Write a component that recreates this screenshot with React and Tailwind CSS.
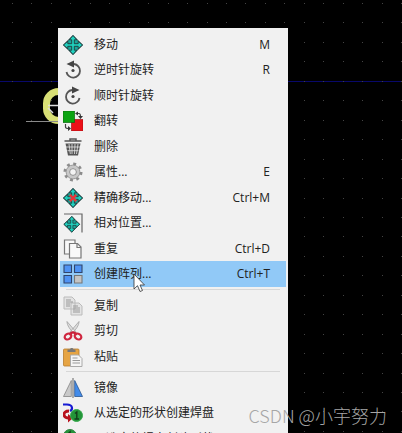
const GRID = 19.45;

const dots = Array.from({ length: 23 }, (_, row) =>
  Array.from({ length: 21 }, (_, col) => ({
    x: Math.round(12 + col * GRID),
    y: Math.round(3 + row * GRID),
  })),
).flat();

function Move() {
  return (
    <g fill="#1fd0bd" stroke="#22383a" strokeWidth=".9" strokeLinejoin="round">
      <path d="M10 .5 19.500 10 10 19.500 .5 10Z" fill="#1aa79b" />
      <path d="M10 .5 13.800 4.800H11.300V8.700H15.200V6.200L19.500 10 15.200 13.800V11.300H11.300V15.200H13.800L10 19.500 6.200 15.200H8.700V11.300H4.800V13.800L.5 10 4.800 6.200V8.700H8.700V4.800H6.200Z" />
    </g>
  );
}

const icons = {
  move: <Move />,
  ccw: (
    <>
      <path d="M11 4A6.800 6.800 0 1 1 3.500 12" fill="none" stroke="#555" strokeWidth="1.800" />
      <path d="M3.500 4 11 .5v7Z" fill="#444" />
      <circle cx="10" cy="10.500" r="1.600" fill="#444" />
    </>
  ),
  cw: (
    <>
      <path d="M9 4a6.800 6.800 0 1 0 7.500 8" fill="none" stroke="#555" strokeWidth="1.800" />
      <path d="M16.500 4 9 .5v7Z" fill="#444" />
      <circle cx="10" cy="10.500" r="1.600" fill="#444" />
    </>
  ),
  flip: (
    <>
      <path d="M8.500 8.500H20V20H8.500Z" fill="#ec1118" stroke="#a51317" strokeWidth=".7" />
      <path d="M0 0h11.500v11.500H0Z" fill="#0ca312" stroke="#0b6610" strokeWidth=".7" />
      <path d="M13.500 2.500h2.500q1.500 0 1.500 3M2.500 13v3q0 1.500 3 1.500" fill="none" stroke="#444" strokeWidth="1.200" />
      <path d="m12 2.500 3-2v4ZM8 17.500l-3-2.500v5ZM15 5h5l-2.500 3Z" fill="#333" />
    </>
  ),
  trash: (
    <>
      <path d="M1.500 4h17M7 3.500V2h6v1.500" fill="none" stroke="#555" strokeWidth="1.500" />
      <path d="M2.500 6.500h15l-2.500 12H5Z" fill="#555" />
      <path d="M6 7 7.300 17M9 7v10M12 7 11.500 17M15 7 13.500 17M3 10h14M4.500 13.700h11" stroke="#e7e7e7" strokeWidth=".8" />
    </>
  ),
  gear: (
    <>
      <circle cx="10" cy="10" r="8.200" fill="none" stroke="#8c8c8c" strokeWidth="2.600" strokeDasharray="2.900 3.540" />
      <circle cx="10" cy="10" r="5" fill="#f3f3f3" stroke="#c8c8c8" strokeWidth="3.200" />
      <circle cx="10" cy="10" r="6.900" fill="none" stroke="#858585" strokeWidth=".8" />
      <circle cx="10" cy="10" r="3.400" fill="#f3f3f3" stroke="#858585" strokeWidth=".9" />
    </>
  ),
  exact: (
    <>
      <Move />
      <path d="m6.800 6.800 6.400 6.400M13.200 6.800l-6.400 6.400" stroke="#e4373a" strokeWidth="2.500" />
    </>
  ),
  relative: (
    <>
      <path d="M1 1h18v18.500" fill="none" stroke="#666" strokeWidth="1.200" />
      <g transform="translate(.5 3) scale(.83)">
        <Move />
      </g>
    </>
  ),
  duplicate: (
    <g fill="#f8f8f8" stroke="#777" strokeWidth="1.200">
      <path d="M1.500 1H12v14H1.500Z" />
      <path d="M6.500 4.500h8L18 8v11H6.500Z" />
      <path d="M14 4.500V8.500h4" fill="none" />
    </g>
  ),
  array: (
    <g fill="#4f93f4" stroke="#30456c" strokeWidth="1.100">
      <path d="M1 1h7.500v7.500H1ZM11.500 1H19v7.500h-7.500ZM1 11.500h7.500V19H1Z" />
      <path d="M11.500 11.500H19V19h-7.500Z" fill="#c4c4c4" stroke="#777" />
    </g>
  ),
  copy: (
    <>
      <path d="M1 1h8l3 3v9H1ZM8 7h8l3 3v9H8Z" fill="#e3e3e3" stroke="#bbb" />
      <path d="M3 4h5M3 6h7M3 8h4M3 10h4M10 10h5M10 12h7M10 14h7M10 16h7" stroke="#999" />
    </>
  ),
  cut: (
    <>
      <path d="M4 .5c0 4 3 8 7.500 12.500l1.500-2ZM16 .5c0 4-3 8-7.500 12.500L7 11Z" fill="#ddd" stroke="#999" strokeWidth=".7" />
      <path d="m10 11-4 2.500M10 11l4 2.500" stroke="#c91f38" strokeWidth="2.400" />
      <ellipse cx="5" cy="15.500" rx="3.500" ry="2.700" transform="rotate(-30 5 15.500)" fill="none" stroke="#cf263f" strokeWidth="2.200" />
      <ellipse cx="15" cy="15.500" rx="3.500" ry="2.700" transform="rotate(30 15 15.500)" fill="none" stroke="#cf263f" strokeWidth="2.200" />
    </>
  ),
  paste: (
    <>
      <rect x=".5" y="2" width="15.500" height="17" rx="1" fill="#e6a443" stroke="#b77c2c" strokeWidth=".8" />
      <path d="M4.500 5V2.500H7a1.800 1.800 0 0 1 3.500 0h2V5Z" fill="#777" />
      <path d="M7.500 8h8l3.500 3.500V19.500H7.500Z" fill="#f5f5f5" stroke="#aaa" />
      <path d="M9.500 11h5M9.500 13.500h7.500M9.500 16h7.500" stroke="#999" />
    </>
  ),
  mirror: (
    <>
      <path d="M8.300 2.500v16H.5Z" fill="#c9c9c9" stroke="#858585" strokeWidth=".8" />
      <path d="M11.700 2.500v16h7.800Z" fill="#428bea" stroke="#2c568d" strokeWidth=".8" />
      <path d="M10 0v20" stroke="#555" strokeWidth=".9" />
    </>
  ),
  pad: (
    <>
      <path d="M0 1.500h4c6 0 6 5 3 6.500" fill="none" stroke="#171bd3" strokeWidth="2.200" />
      <path d="M6 8C-1 8 0 15 5 15h3" fill="none" stroke="#b8121d" strokeWidth="2.800" />
      <path d="m5 11 5 4-5 4.500Z" fill="#b8121d" />
      <circle cx="13.500" cy="12.500" r="6" fill="#239439" stroke="#38aa4d" />
      <path d="m12 10.500 1.800-1.500v7M11.500 16h4.500" fill="none" stroke="#123d1a" strokeWidth="1.400" />
    </>
  ),
  shape: (
    <>
      <circle cx="7" cy="7" r="6.500" fill="#239439" stroke="#2f8240" />
      <path d="m5 5 2-2v7M5 10h4" fill="none" stroke="#123d1a" strokeWidth="1.500" />
      <path d="M12 13h4v5" fill="none" stroke="#b8121d" strokeWidth="2" />
    </>
  ),
};

const groups = [
  [
    { icon: 'move', label: '移动', shortcut: 'M' },
    { icon: 'ccw', label: '逆时针旋转', shortcut: 'R' },
    { icon: 'cw', label: '顺时针旋转' },
    { icon: 'flip', label: '翻转' },
    { icon: 'trash', label: '删除' },
    { icon: 'gear', label: '属性...', shortcut: 'E' },
    { icon: 'exact', label: '精确移动...', shortcut: 'Ctrl+M' },
    { icon: 'relative', label: '相对位置...' },
    { icon: 'duplicate', label: '重复', shortcut: 'Ctrl+D' },
    { icon: 'array', label: '创建阵列...', shortcut: 'Ctrl+T', active: true },
  ],
  [
    { icon: 'copy', label: '复制' },
    { icon: 'cut', label: '剪切' },
    { icon: 'paste', label: '粘贴' },
  ],
  [
    { icon: 'mirror', label: '镜像' },
    { icon: 'pad', label: '从选定的形状创建焊盘' },
    { icon: 'shape', label: '从选定的焊盘创建形状' },
  ],
];

function Board() {
  return (
    <svg className="absolute inset-0 h-full w-full" aria-hidden="true">
      <path d="M0 81.500h2000" stroke="#08086a" />
      {dots.map(({ x, y }) => (
        <rect key={`${x}-${y}`} x={x} y={y} width="1" height="1" fill="#444" />
      ))}
      <rect x="46.500" y="91.500" width="30" height="29" rx="12" fill="none" stroke="#d8df75" strokeWidth="7" />
      <path d="M26 121.500h34" stroke="#8a8a8a" />
      <path d="M48 105.500h12M48 108l5 5" stroke="#ddd" strokeWidth="1.500" />
    </svg>
  );
}

function MenuItem({ item }) {
  return (
    <li role="none" className="h-[25px] even:h-[26px]">
      <button
        type="button"
        role="menuitem"
        className={`flex h-full w-full items-center pr-4 pl-[3px] text-left ${item.active ? 'bg-[#91c9f7]' : 'hover:bg-[#91c9f7]'}`}
      >
        <svg viewBox="0 0 20 20" className="h-5 w-5 shrink-0" aria-hidden="true">
          {icons[item.icon]}
        </svg>
        <span className="ml-[11px] flex-1 whitespace-nowrap">{item.label}</span>
        {item.shortcut && <kbd className="font-[inherit]">{item.shortcut}</kbd>}
      </button>
    </li>
  );
}

export default function App() {
  return (
    <main className="relative h-screen overflow-hidden bg-black pt-7 pl-[58px] font-['Open_Sans','Noto_Sans_CJK_SC',sans-serif]">
      <Board />
      <div role="menu" className="relative w-[230px] bg-[#f1f1f1] px-0.5 py-1 text-xs text-[#222]">
        {groups.map((items, index) => (
          <div key={items[0].label}>
            {index > 0 && <hr className="mx-1.5 mt-0.5 mb-[3px] border-[#d7d7d7]" />}
            <ul role="none">
              {items.map((item) => (
                <MenuItem key={item.label} item={item} />
              ))}
            </ul>
          </div>
        ))}
      </div>
      <svg viewBox="0 0 12 20" className="absolute top-[273px] left-[133px] h-5 w-3" aria-hidden="true">
        <path d="M1 1v15l3.500-3.300L7 18.500l2.500-1L7 12h4.500Z" fill="#fff" stroke="#333" strokeWidth=".8" />
      </svg>
      <p className="absolute right-[15px] bottom-1 font-['Noto_Sans_CJK_SC',sans-serif] text-lg font-light whitespace-nowrap text-[#a6a6a6]">
        CSDN @小宇努力
      </p>
    </main>
  );
}
